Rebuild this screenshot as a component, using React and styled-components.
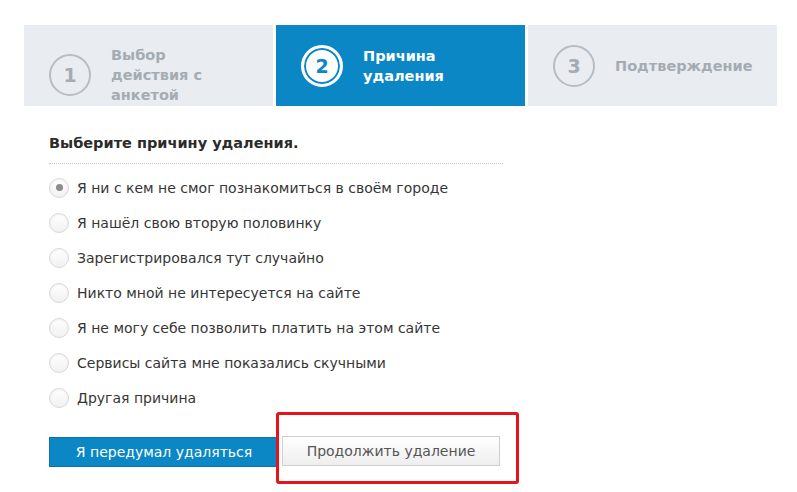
import styled, { createGlobalStyle } from "styled-components";

const GlobalStyle = createGlobalStyle`
  html, body {
    margin: 0;
    padding: 0;
    background: #fff;
  }
  body {
    font-family: "DejaVu Sans", Verdana, sans-serif;
    color: #333;
  }
`;

const Page = styled.div`
  box-sizing: border-box;
  min-height: 100vh;
  padding: 25px 19px 30px 24px;
  width: 797px;
`;

const Steps = styled.div`
  display: grid;
  grid-template-columns: 249px 249px 249px;
  column-gap: 3px;
`;

const Step = styled.div`
  box-sizing: border-box;
  height: 81px;
  padding: 20px 0 0 25px;
  background: ${(p) => (p.$active ? "#0b87c6" : "#e9edf2")};
`;

const StepRow = styled.div`
  display: flex;
  align-items: center;
  gap: 20px;
`;

const StepCircle = styled.div`
  box-sizing: border-box;
  flex: none;
  width: 42px;
  height: 42px;
  border-radius: 50%;
  display: flex;
  align-items: center;
  justify-content: center;
  font-size: 19px;
  font-weight: bold;
  border: ${(p) => (p.$active ? "3px solid #fff" : "2px solid #b6bdc3")};
  background: ${(p) => (p.$active ? "#fff" : "transparent")};
  box-shadow: ${(p) => (p.$active ? "inset 0 0 0 2px #0b87c6" : "none")};
  color: ${(p) => (p.$active ? "#0b87c6" : "#a4acb2")};
`;

const StepLabel = styled.div`
  font-size: 14.5px;
  font-weight: bold;
  line-height: 20px;
  color: ${(p) => (p.$active ? "#fff" : "#a4acb2")};
`;

const Content = styled.div`
  padding-left: 25px;
`;

const Heading = styled.div`
  margin-top: 27px;
  width: 454px;
  padding-bottom: 10px;
  border-bottom: 1px dotted #c8c8c8;
  font-size: 14.5px;
  line-height: 20px;
  font-weight: bold;
  color: #2b2b2b;
`;

const Options = styled.div`
  margin-top: 6px;
  display: flex;
  flex-direction: column;
`;

const Option = styled.label`
  display: flex;
  align-items: center;
  gap: 8px;
  height: 35px;
  font-size: 14px;
  color: #363636;
  cursor: pointer;
`;

const Radio = styled.span`
  box-sizing: border-box;
  width: 20px;
  height: 20px;
  border-radius: 50%;
  border: 1px solid #d9d9d9;
  background: linear-gradient(#ffffff, #f1f1f1);
  box-shadow: inset 0 1px 2px rgba(0, 0, 0, 0.06);
  display: flex;
  align-items: center;
  justify-content: center;
  &::after {
    content: "";
    width: 7px;
    height: 7px;
    border-radius: 50%;
    background: ${(p) => (p.$checked ? "#8c8c8c" : "transparent")};
  }
`;

const Buttons = styled.div`
  margin-top: 21px;
  display: flex;
  align-items: flex-start;
  gap: 3px;
`;

const PrimaryButton = styled.button`
  box-sizing: border-box;
  width: 230px;
  height: 30px;
  margin-top: 1px;
  border: 1px solid #0a74ad;
  background: #0b87c6;
  color: #fff;
  font-family: inherit;
  font-size: 14px;
  cursor: pointer;
`;

const Highlight = styled.div`
  position: relative;
  &::before {
    content: "";
    position: absolute;
    top: -24px;
    left: -6px;
    right: -19px;
    bottom: -18px;
    border: 3px solid #e3141c;
    border-radius: 3px;
    pointer-events: none;
  }
`;

const SecondaryButton = styled.button`
  box-sizing: border-box;
  width: 218px;
  height: 30px;
  border: 1px solid #cfcfcf;
  background: linear-gradient(#ffffff, #eeeeee);
  color: #555;
  font-family: inherit;
  font-size: 14px;
  cursor: pointer;
`;

const steps = [
  { n: 1, lines: ["Выбор", "действия с", "анкетой"] },
  { n: 2, lines: ["Причина", "удаления"], active: true },
  { n: 3, lines: ["Подтверждение"] },
];

const reasons = [
  "Я ни с кем не смог познакомиться в своём городе",
  "Я нашёл свою вторую половинку",
  "Зарегистрировался тут случайно",
  "Никто мной не интересуется на сайте",
  "Я не могу себе позволить платить на этом сайте",
  "Сервисы сайта мне показались скучными",
  "Другая причина",
];

export default function App() {
  return (
    <>
      <GlobalStyle />
      <Page>
        <Steps>
          {steps.map((s) => (
            <Step key={s.n} $active={s.active}>
              <StepRow>
                <StepCircle $active={s.active}>{s.n}</StepCircle>
                <StepLabel $active={s.active}>
                  {s.lines.map((l, i) => (
                    <div key={i}>{l}</div>
                  ))}
                </StepLabel>
              </StepRow>
            </Step>
          ))}
        </Steps>
        <Content>
          <Heading>Выберите причину удаления.</Heading>
          <Options>
            {reasons.map((r, i) => (
              <Option key={i}>
                <Radio $checked={i === 0} />
                {r}
              </Option>
            ))}
          </Options>
          <Buttons>
            <PrimaryButton>Я передумал удаляться</PrimaryButton>
            <Highlight>
              <SecondaryButton>Продолжить удаление</SecondaryButton>
            </Highlight>
          </Buttons>
        </Content>
      </Page>
    </>
  );
}
